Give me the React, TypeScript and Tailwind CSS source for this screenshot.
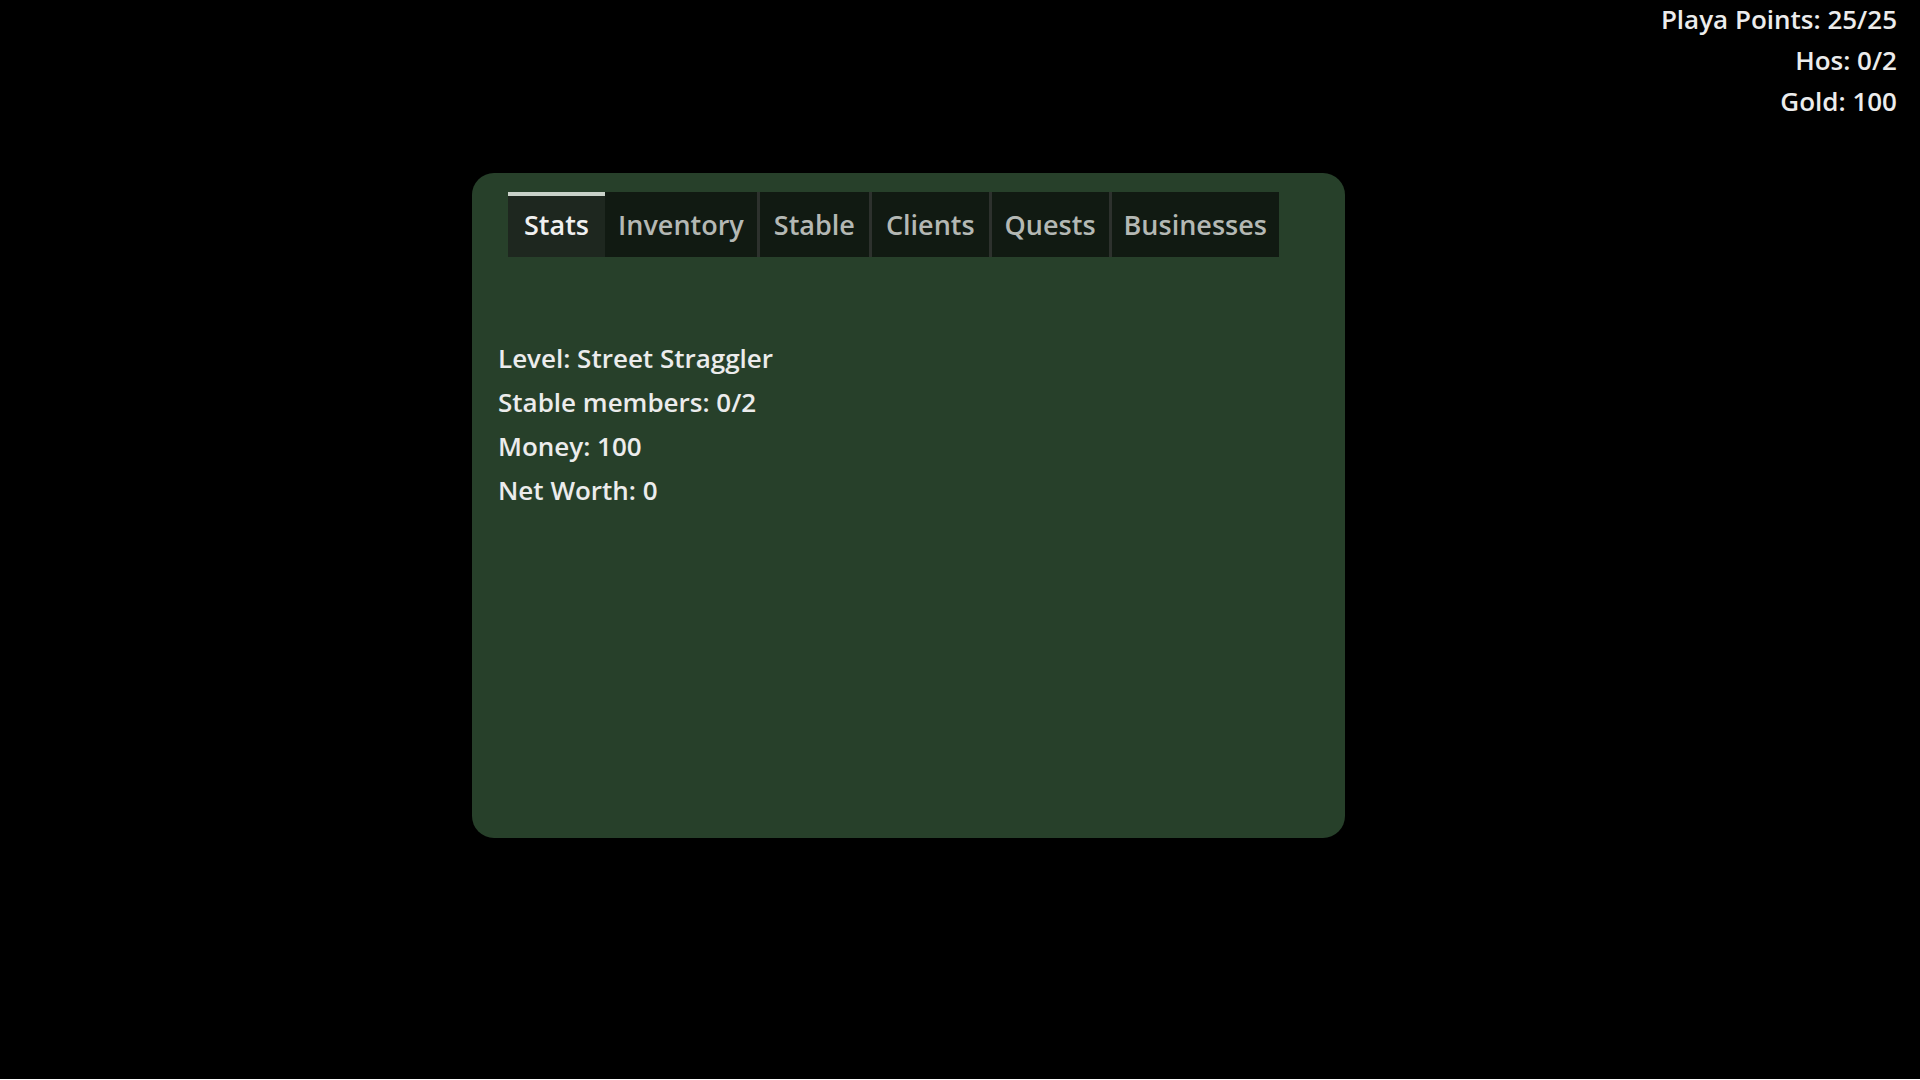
const TABS = [
  { label: 'Stats', pad: 'px-[16px]' },
  { label: 'Inventory', pad: 'px-[13px]' },
  { label: 'Stable', pad: 'px-[14px]' },
  { label: 'Clients', pad: 'px-[14px]' },
  { label: 'Quests', pad: 'px-[13px]' },
  { label: 'Businesses', pad: 'px-[12px]' },
]

const STATS = [
  'Level: Street Straggler',
  'Stable members: 0/2',
  'Money: 100',
  'Net Worth: 0',
]

export default function App() {
  const active = 'Stats'

  return (
    <div className="min-h-[1080px] w-full bg-black font-['Open_Sans',sans-serif] font-semibold text-[#ececec]">
      {/* HUD */}
      <div className="-mt-[1px] pr-[23px] text-right text-[26px] leading-[41px]">
        <p>Playa Points: 25/25</p>
        <p>Hos: 0/2</p>
        <p>Gold: 100</p>
      </div>

      {/* main panel */}
      <div className="ml-[472px] mt-[51px] h-[665px] w-[873px] rounded-[22px] bg-[#27402a] pt-[19px]">
        <div className="ml-[36px] flex h-[65px] w-fit">
          {TABS.map((tab, i) => {
            const isActive = tab.label === active
            let cls = 'flex items-center text-[27px] ' + tab.pad
            if (isActive) {
              cls += ' border-t-4 border-[#c9d1c9] bg-[#1e271f] pb-[2px] text-[#f0f0f0]'
            } else {
              cls += ' bg-[#111a12] pt-[2px] text-[#b4b8b4]'
              if (i > 1) cls += ' border-l-[3px] border-[#2d312d]'
            }
            return (
              <div key={tab.label} className={cls}>
                {tab.label}
              </div>
            )
          })}
        </div>

        <div className="mt-[79px] pl-[26px] text-[26px] leading-[44px]">
          {STATS.map((line) => (
            <p key={line}>{line}</p>
          ))}
        </div>
      </div>
    </div>
  )
}
